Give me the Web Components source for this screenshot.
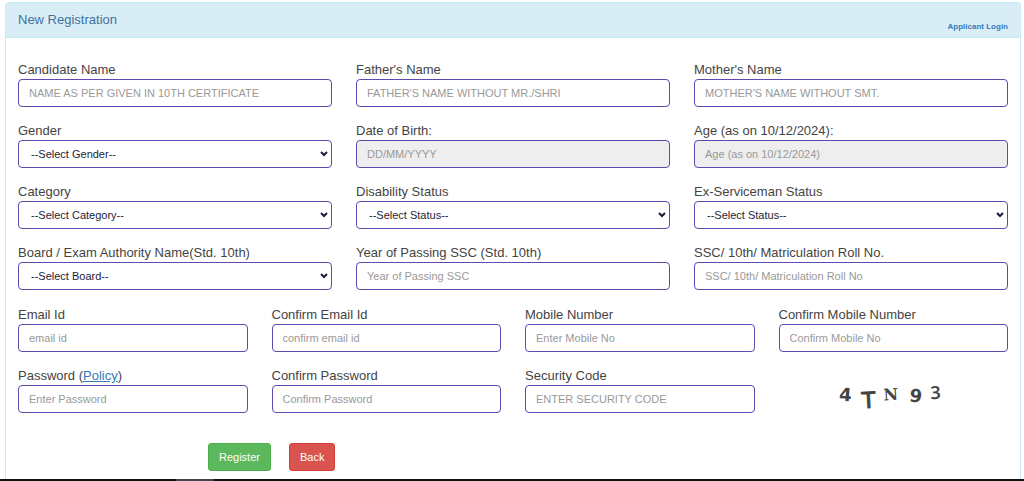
<!DOCTYPE html>
<html lang="en">
<head>
<meta charset="utf-8">
<meta name="viewport" content="width=device-width, initial-scale=1">
<title>New Registration</title>
<style>
	body {
		margin: 0;
		background: #fff;
		color: #444;
		font-family: "Liberation Sans", Arial, sans-serif;
		font-size: 13px;
	}
</style>
</head>
<body>
<reg-page>
	<reg-panel heading="New Registration">
		<a slot="action" href="#login">Applicant Login</a>
		<reg-row columns="3">
			<reg-input placeholder="NAME AS PER GIVEN IN 10TH CERTIFICATE">Candidate Name</reg-input>
			<reg-input placeholder="FATHER'S NAME WITHOUT MR./SHRI">Father's Name</reg-input>
			<reg-input placeholder="MOTHER'S NAME WITHOUT SMT.">Mother's Name</reg-input>
			<reg-select option="--Select Gender--">Gender</reg-select>
			<reg-input placeholder="DD/MM/YYYY" readonly>Date of Birth:</reg-input>
			<reg-input placeholder="Age (as on 10/12/2024)" readonly>Age (as on 10/12/2024):</reg-input>
			<reg-select option="--Select Category--">Category</reg-select>
			<reg-select option="--Select Status--">Disability Status</reg-select>
			<reg-select option="--Select Status--">Ex-Serviceman Status</reg-select>
			<reg-select option="--Select Board--">Board / Exam Authority Name(Std. 10th)</reg-select>
			<reg-input placeholder="Year of Passing SSC">Year of Passing SSC (Std. 10th)</reg-input>
			<reg-input placeholder="SSC/ 10th/ Matriculation Roll No">SSC/ 10th/ Matriculation Roll No.</reg-input>
		</reg-row>
		<reg-row columns="4">
			<reg-input type="email" placeholder="email id">Email Id</reg-input>
			<reg-input type="email" placeholder="confirm email id">Confirm Email Id</reg-input>
			<reg-input type="tel" placeholder="Enter Mobile No">Mobile Number</reg-input>
			<reg-input type="tel" placeholder="Confirm Mobile No">Confirm Mobile Number</reg-input>
			<reg-input type="password" placeholder="Enter Password">Password (<a href="#policy">Policy</a>)</reg-input>
			<reg-input type="password" placeholder="Confirm Password">Confirm Password</reg-input>
			<reg-input placeholder="ENTER SECURITY CODE">Security Code</reg-input>
			<reg-captcha></reg-captcha>
		</reg-row>
		<reg-actions>
			<reg-button kind="success">Register</reg-button>
			<reg-button kind="danger">Back</reg-button>
		</reg-actions>
	</reg-panel>
</reg-page>

<script>
const fieldStyles = `
	:host {
		display: block;
		min-width: 0;
	}

	label {
		display: block;
		font-size: 13px;
		line-height: 19px;
		white-space: nowrap;
	}

	::slotted(a) {
		color: #337ab7;
	}

	input,
	select {
		display: block;
		box-sizing: border-box;
		width: 100%;
		height: 28px;
		margin: 0;
		border: 1px solid #5d49b0;
		border-radius: 4px;
		background-color: #fff;
		color: #1d1d35;
		font-family: inherit;
		font-size: 11px;
	}

	input {
		padding: 0 10px;
	}

	input::placeholder {
		color: #999;
		opacity: 1;
	}

	input[readonly] {
		background-color: #eee;
	}
`;

function define(name, html, setup) {
	const template = document.createElement('template');
	template.innerHTML = html;

	customElements.define(name, class extends HTMLElement {
		constructor() {
			super();
			const shadowRoot = this.attachShadow({mode: 'open'});
			shadowRoot.appendChild(template.content.cloneNode(true));

			if (setup) {
				setup(this, shadowRoot);
			}
		}
	});
}

define('reg-page', `
	<style>
		:host {
			display: flex;
			flex-direction: column;
			min-height: 100vh;
		}

		main {
			display: flex;
			flex: 1;
			padding: 2px 3px 0 5px;
		}

		footer {
			height: 2px;
			padding-left: 176px;
			background: #111;
		}

		footer::before {
			content: "";
			display: block;
			width: 38px;
			height: 2px;
			background: #44444c;
		}
	</style>
	<main><slot></slot></main>
	<footer></footer>
`);

define('reg-panel', `
	<style>
		:host {
			display: block;
			flex: 1;
			min-width: 0;
			border: 1px solid #c5ebf5;
			border-bottom: 0;
			border-radius: 4px 4px 0 0;
		}

		header {
			display: flex;
			justify-content: space-between;
			align-items: flex-start;
			height: 34px;
			padding: 0 12px;
			border-bottom: 1px solid #c5ebf5;
			border-radius: 3px 3px 0 0;
			background: #d9edf7;
		}

		h1 {
			margin: 0;
			color: #41719c;
			font-size: 13px;
			font-weight: 400;
			line-height: 34px;
		}

		::slotted(a) {
			align-self: flex-end;
			color: #337ab7;
			font-size: 8px;
			font-weight: 700;
			line-height: 20px;
			text-decoration: none;
		}

		form {
			padding: 22px 12px 8px;
		}
	</style>
	<header>
		<h1></h1>
		<slot name="action"></slot>
	</header>
	<form><slot></slot></form>
`, (host, root) => {
	root.querySelector('h1').textContent = host.getAttribute('heading');
});

define('reg-row', `
	<style>
		:host {
			display: grid;
			grid-template-columns: repeat(var(--columns), minmax(0, 1fr));
			gap: 14px 24px;
			margin-bottom: 15px;
		}
	</style>
	<slot></slot>
`, (host, root) => {
	root.querySelector('style').append(`:host { --columns: ${host.getAttribute('columns')}; }`);
});

define('reg-input', `
	<style>${fieldStyles}</style>
	<label for="control"><slot></slot></label>
	<input id="control">
`, (host, root) => {
	const input = root.getElementById('control');
	input.type = host.getAttribute('type') || 'text';
	input.placeholder = host.getAttribute('placeholder');
	input.readOnly = host.hasAttribute('readonly');
});

define('reg-select', `
	<style>
		${fieldStyles}

		.box {
			display: grid;
			align-items: center;
		}

		select,
		svg {
			grid-area: 1 / 1;
		}

		select {
			appearance: none;
			padding: 0 16px 0 12px;
		}

		svg {
			justify-self: end;
			width: 8px;
			height: 6px;
			margin-right: 4px;
			fill: none;
			stroke: #1d1d35;
			stroke-width: 2;
			pointer-events: none;
		}
	</style>
	<label for="control"><slot></slot></label>
	<div class="box">
		<select id="control"><option></option></select>
		<svg viewBox="0 0 8 6" aria-hidden="true"><path d="M1 1l3 3 3-3"/></svg>
	</div>
`, (host, root) => {
	root.querySelector('option').textContent = host.getAttribute('option');
});

define('reg-captcha', `
	<style>
		:host {
			display: flex;
			justify-content: center;
			align-items: flex-end;
		}

		svg {
			width: 120px;
			height: 36px;
			fill: #444;
			font-family: "DejaVu Sans", sans-serif;
			font-size: 18px;
			font-weight: 700;
			text-anchor: middle;
		}

		.tall {
			font-size: 22px;
			font-weight: 400;
			stroke: #444;
			stroke-width: 1px;
		}

		.serif {
			font-family: "DejaVu Serif", serif;
			font-size: 16px;
		}

		.light {
			font-family: "Noto Sans", sans-serif;
			font-weight: 600;
		}
	</style>
	<svg viewBox="0 0 120 36" role="img" aria-label="Security code">
		<text transform="translate(12 24) rotate(4)">4</text>
		<text class="tall" transform="translate(36 31) rotate(-3)">T</text>
		<text class="serif" transform="translate(58 23) rotate(-3)">N</text>
		<text transform="translate(82 25) rotate(8)">9</text>
		<text class="light" transform="translate(103 22) rotate(-3)">3</text>
	</svg>
`);

define('reg-actions', `
	<style>
		:host {
			display: flex;
			gap: 18px;
			margin-top: 30px;
			padding-left: 190px;
		}
	</style>
	<slot></slot>
`);

define('reg-button', `
	<style>
		:host {
			display: block;
			--fill: #5cb85c;
			--edge: #4cae4c;
		}

		:host([kind="danger"]) {
			--fill: #d9534f;
			--edge: #d43f3a;
		}

		button {
			display: block;
			height: 28px;
			padding: 0 10px;
			border: 1px solid var(--edge);
			border-radius: 3px;
			background: var(--fill);
			color: #fff;
			font-family: inherit;
			font-size: 11px;
		}
	</style>
	<button type="button"><slot></slot></button>
`);
</script>
</body>
</html>
